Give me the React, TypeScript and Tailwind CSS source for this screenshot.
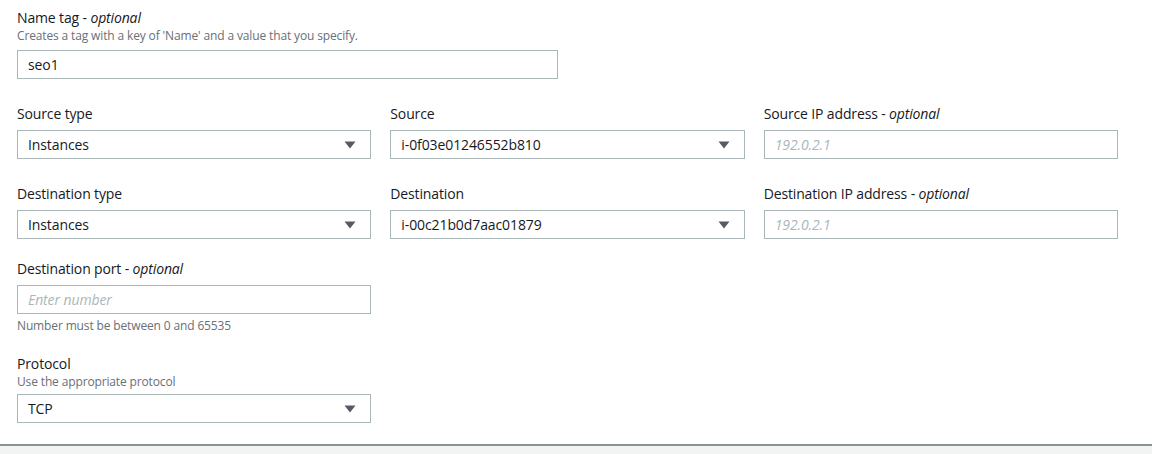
import React from "react";

const font = { fontFamily: '"Open Sans", "Noto Sans", Arial, sans-serif' };

function Caret() {
  return (
    <svg width="12" height="8" viewBox="0 0 12 8" className="shrink-0">
      <path d="M0.5 0.5 H11.5 L6 7.5 Z" fill="#545b64" />
    </svg>
  );
}

function Label({ text, optional }: { text: string; optional?: boolean }) {
  return (
    <div className="text-[14px] leading-[20px] tracking-[-0.14px] text-[#16191f]">
      {text}
      {optional && (
        <>
          {" - "}
          <i>optional</i>
        </>
      )}
    </div>
  );
}

function Hint({ text }: { text: string }) {
  return (
    <div className="text-[12px] leading-[16px] tracking-[-0.14px] text-[#687078]">{text}</div>
  );
}

function Select({ value }: { value: string }) {
  return (
    <div className="flex h-[29px] items-center justify-between border border-[#aab7b8] bg-white pl-[10px] pr-[14px] text-[14px] tracking-[-0.1px] text-[#16191f]">
      <span>{value}</span>
      <Caret />
    </div>
  );
}

function Input({ value, placeholder }: { value?: string; placeholder?: string }) {
  return (
    <div className="flex h-[29px] items-center border border-[#aab7b8] bg-white px-[10px] text-[14px] tracking-[-0.1px]">
      {value ? (
        <span className="text-[#16191f]">{value}</span>
      ) : (
        <span className="italic text-[#aab7b8]">{placeholder}</span>
      )}
    </div>
  );
}

export default function App() {
  return (
    <div className="flex h-[454px] w-[1152px] flex-col bg-white" style={font}>
      <div className="flex-1 px-[17px] pt-[8px]">
        <div className="grid w-[1101px] grid-cols-2 gap-x-[19px]">
          <div>
            <Label text="Name tag" optional />
            <Hint text="Creates a tag with a key of 'Name' and a value that you specify." />
            <div className="mt-[6px]">
              <Input value="seo1" />
            </div>
          </div>
        </div>

        <div className="mt-[25px] grid w-[1101px] grid-cols-3 gap-x-[19px] gap-y-[25px]">
          <div>
            <Label text="Source type" />
            <div className="mt-[6px]">
              <Select value="Instances" />
            </div>
          </div>
          <div>
            <Label text="Source" />
            <div className="mt-[6px]">
              <Select value="i-0f03e01246552b810" />
            </div>
          </div>
          <div>
            <Label text="Source IP address" optional />
            <div className="mt-[6px]">
              <Input placeholder="192.0.2.1" />
            </div>
          </div>
          <div>
            <Label text="Destination type" />
            <div className="mt-[6px]">
              <Select value="Instances" />
            </div>
          </div>
          <div>
            <Label text="Destination" />
            <div className="mt-[6px]">
              <Select value="i-00c21b0d7aac01879" />
            </div>
          </div>
          <div>
            <Label text="Destination IP address" optional />
            <div className="mt-[6px]">
              <Input placeholder="192.0.2.1" />
            </div>
          </div>
        </div>

        <div className="mt-[20px] grid w-[1101px] grid-cols-3 gap-x-[19px]">
          <div>
            <Label text="Destination port" optional />
            <div className="mt-[6px]">
              <Input placeholder="Enter number" />
            </div>
            <div className="mt-[4px]">
              <Hint text="Number must be between 0 and 65535" />
            </div>
          </div>
        </div>

        <div className="mt-[20px] grid w-[1101px] grid-cols-3 gap-x-[19px]">
          <div>
            <Label text="Protocol" />
            <Hint text="Use the appropriate protocol" />
            <div className="mt-[4px]">
              <Select value="TCP" />
            </div>
          </div>
        </div>
      </div>
      <div className="h-[10px] shrink-0 border-t-2 border-[#879596] bg-[#f2f3f3]" />
    </div>
  );
}
